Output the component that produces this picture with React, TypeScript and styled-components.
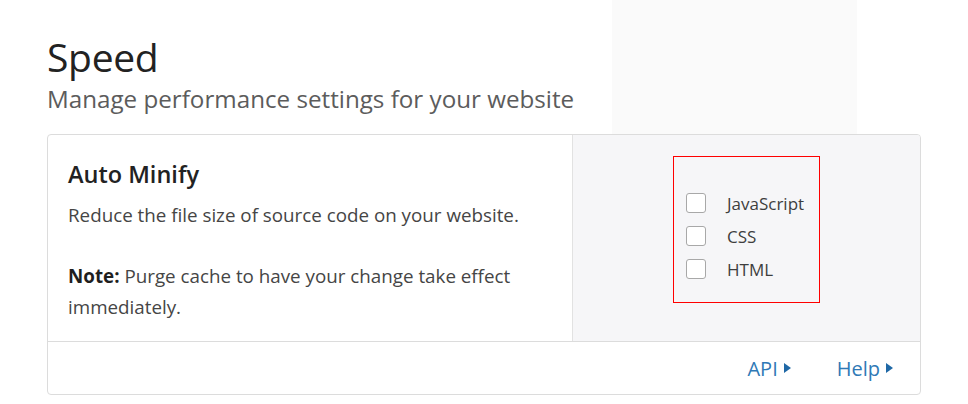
import React from "react";
import styled, { createGlobalStyle } from "styled-components";

const Global = createGlobalStyle`
  html, body { margin: 0; padding: 0; background: #ffffff; }
  body { font-family: "Open Sans", "Noto Sans", sans-serif; color: #222; }
`;

const Page = styled.div`
  width: 968px;
  height: 404px;
  overflow: hidden;
`;

const Header = styled.header`
  display: grid;
  grid-template-columns: 1fr 245px;
  margin-right: 111px;
  height: 134px;
`;

const HeaderText = styled.div`
  padding: 34px 0 0 47px;
`;

const Title = styled.h1`
  margin: 0;
  font-size: 39px;
  line-height: 46px;
  font-weight: 400;
  color: #222;
  letter-spacing: -0.3px;
`;

const Subtitle = styled.p`
  margin: 4px 0 0;
  font-size: 24.2px;
  line-height: 30px;
  color: #5c5c5c;
  white-space: nowrap;
`;

const Shade = styled.div`
  background: #fafafa;
`;

const Card = styled.section`
  margin-left: 47px;
  width: 874px;
  box-sizing: border-box;
  border: 1px solid #dcdcdc;
  border-radius: 4px;
  overflow: hidden;
`;

const CardBody = styled.div`
  display: flex;
  height: 206px;
  border-bottom: 1px solid #dcdcdc;
`;

const Info = styled.div`
  width: 525px;
  box-sizing: border-box;
  padding: 24px 20px 0;
  border-right: 1px solid #e2e2e2;
`;

const CardTitle = styled.h2`
  margin: 0;
  font-size: 23.5px;
  line-height: 30px;
  font-weight: 600;
  color: #222;
`;

const Text = styled.p<{ $gap?: number }>`
  margin: ${(p) => p.$gap ?? 0}px 0 0;
  font-size: 18.8px;
  line-height: 31px;
  color: #454545;
`;

const Strong = styled.strong`
  color: #1f1f1f;
  font-weight: 700;
`;

const Control = styled.div`
  flex: 1;
  background: #f6f6f8;
  display: flex;
  justify-content: center;
  align-items: flex-start;
  padding-top: 21px;
`;

const Highlight = styled.div`
  width: 147px;
  height: 147px;
  box-sizing: border-box;
  border: 1px solid #ff0000;
  padding: 36px 0 0 12px;
  display: flex;
  flex-direction: column;
  gap: 13px;
`;

const Option = styled.label`
  display: flex;
  align-items: center;
  gap: 21px;
  height: 20px;
  font-size: 17px;
  color: #3e3e3e;
`;

const Box = styled.span`
  width: 20px;
  height: 20px;
  box-sizing: border-box;
  border: 1.5px solid #a8a8a8;
  border-radius: 3px;
  background: #fff;
  flex: none;
`;

const Footer = styled.footer`
  height: 52px;
  display: flex;
  justify-content: flex-end;
  align-items: center;
  gap: 46px;
  padding-right: 27px;
`;

const Link = styled.a`
  display: flex;
  align-items: center;
  gap: 6px;
  font-size: 20px;
  color: #2f79b6;
  text-decoration: none;
  cursor: pointer;
`;

const Caret = () => (
  <svg width="7" height="10" viewBox="0 0 7 10" aria-hidden="true">
    <path d="M0 0 L7 5 L0 10 Z" fill="#1f68a6" />
  </svg>
);

const options = ["JavaScript", "CSS", "HTML"];

export default function App() {
  return (
    <Page>
      <Global />
      <Header>
        <HeaderText>
          <Title>Speed</Title>
          <Subtitle>Manage performance settings for your website</Subtitle>
        </HeaderText>
        <Shade />
      </Header>
      <Card>
        <CardBody>
          <Info>
            <CardTitle>Auto Minify</CardTitle>
            <Text $gap={11}>Reduce the file size of source code on your website.</Text>
            <Text $gap={30}>
              <Strong>Note:</Strong> Purge cache to have your change take effect immediately.
            </Text>
          </Info>
          <Control>
            <Highlight>
              {options.map((o) => (
                <Option key={o}>
                  <Box />
                  {o}
                </Option>
              ))}
            </Highlight>
          </Control>
        </CardBody>
        <Footer>
          <Link>
            API
            <Caret />
          </Link>
          <Link>
            Help
            <Caret />
          </Link>
        </Footer>
      </Card>
    </Page>
  );
}
